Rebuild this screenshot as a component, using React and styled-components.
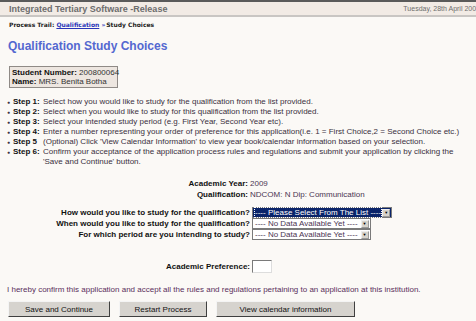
import React from 'react';
import styled, { createGlobalStyle } from 'styled-components';

const GlobalStyle = createGlobalStyle`
    html, body {
        margin: 0;
        padding: 0;
        background-color: #fbf9f6;
        font-family: "Liberation Sans", Arial, sans-serif;
        overflow: hidden;
    }
`;

const steps = [
    { label: 'Step 1:', text: 'Select how you would like to study for the qualification from the list provided.' },
    { label: 'Step 2:', text: 'Select when you would like to study for this qualification from the list provided.' },
    { label: 'Step 3:', text: 'Select your intended study period (e.g. First Year, Second Year etc).' },
    { label: 'Step 4:', text: 'Enter a number representing your order of preference for this application(i.e. 1 = First Choice,2 = Second Choice etc.)' },
    { label: 'Step 5', text: ' (Optional) Click \'View Calendar Information\' to view year book/calendar information based on your selection.' },
    { label: 'Step 6:', text: 'Confirm your acceptance of the application process rules and regulations and submit your application by clicking the \'Save and Continue\' button.' },
];

const questions = [
    { label: 'How would you like to study for the qualification?', value: '---- Please Select From The List ----', active: true },
    { label: 'When would you like to study for the qualification?', value: '---- No Data Available Yet ----' },
    { label: 'For which period are you intending to study?', value: '---- No Data Available Yet ----' },
];

const App = () => {
    return (
        <Page>
            <GlobalStyle />
            <Header>
                <AppName>Integrated Tertiary Software -Release</AppName>
                <DateText>Tuesday, 28th April 2009</DateText>
            </Header>
            <Trail>
                Process Trail: <TrailLink href="#">Qualification</TrailLink>
                {' '}<TrailArrow>»</TrailArrow>Study Choices
            </Trail>
            <Title>Qualification Study Choices</Title>
            <StudentBox>
                <div><b>Student Number:</b> 200800064</div>
                <div><b>Name:</b> MRS. Benita Botha</div>
            </StudentBox>
            <Steps>
                {steps.map((s) => (
                    <Step key={s.label}>
                        <Bullet>●</Bullet>
                        <StepLabel>{s.label}</StepLabel>
                        <StepText>{s.text}</StepText>
                    </Step>
                ))}
            </Steps>
            <InfoGrid>
                <InfoLabel>Academic Year:</InfoLabel>
                <InfoValue>2009</InfoValue>
                <InfoLabel>Qualification:</InfoLabel>
                <InfoValue>NDCOM: N Dip: Communication</InfoValue>
            </InfoGrid>
            <FormGrid>
                {questions.map((q) => (
                    <React.Fragment key={q.label}>
                        <FormLabel>{q.label}</FormLabel>
                        <SelectBox $active={q.active}>
                            <SelectText $active={q.active}>{q.value}</SelectText>
                            <SelectArrow>▼</SelectArrow>
                        </SelectBox>
                    </React.Fragment>
                ))}
            </FormGrid>
            <PrefGrid>
                <FormLabel>Academic Preference:</FormLabel>
                <PrefInput />
            </PrefGrid>
            <Confirm>
                I hereby confirm this application and accept all the rules and regulations pertaining to an application at this institution.
            </Confirm>
            <Buttons>
                <Button $w={102}>Save and Continue</Button>
                <Button $w={88}>Restart Process</Button>
                <Button $w={139}>View calendar information</Button>
            </Buttons>
        </Page>
    );
};

export default App;

const Page = styled.div`
    width: 476px;
    height: 321px;
    border-top: 2px solid #5a5a5a;
    box-sizing: border-box;
    overflow: hidden;
`;

const Header = styled.div`
    display: flex;
    justify-content: space-between;
    align-items: center;
    height: 13px;
    padding: 0 0 0 9px;
    background-color: #f2ebe5;
    border-bottom: 2px solid #c9c6c3;
    white-space: nowrap;
    overflow: hidden;
`;

const AppName = styled.span`
    font-size: 9px;
    font-weight: bold;
    color: #6d6d6d;
`;

const DateText = styled.span`
    font-size: 7px;
    color: #6d6d6d;
    margin-right: -4px;
`;

const Trail = styled.div`
    padding: 4px 0 0 9px;
    font-family: "DejaVu Sans", Verdana, sans-serif;
    font-size: 6px;
    font-weight: bold;
    color: #222;
`;

const TrailLink = styled.a`
    color: #2a35b8;
    text-decoration: underline;
`;

const TrailArrow = styled.span`
    color: #2a35b8;
    margin-right: 1px;
`;

const Title = styled.h1`
    margin: 11px 0 0 8px;
    font-size: 12px;
    font-weight: bold;
    color: #5468d0;
`;

const StudentBox = styled.div`
    display: inline-block;
    margin: 13px 0 0 9px;
    padding: 1px 2px;
    width: 103px;
    border: 1px solid #8f8a86;
    background-color: #ede6e0;
    font-size: 8px;
    line-height: 9px;
    white-space: nowrap;
    color: #333;
    b {
        color: #111;
    }
`;

const Steps = styled.ul`
    list-style: none;
    margin: 9px 0 0 0;
    padding: 0 0 0 7px;
    font-size: 8px;
    line-height: 10px;
    color: #3a3040;
`;

const Step = styled.li`
    display: grid;
    grid-template-columns: 6px 30px 1fr;
    padding-right: 12px;
`;

const Bullet = styled.span`
    font-size: 5px;
`;

const StepLabel = styled.span`
    font-weight: bold;
    color: #111;
`;

const StepText = styled.span``;

const InfoGrid = styled.div`
    display: grid;
    grid-template-columns: 248px auto;
    column-gap: 2px;
    margin-top: 11px;
    font-size: 8px;
    line-height: 11px;
`;

const InfoLabel = styled.span`
    text-align: right;
    font-weight: bold;
    color: #111;
`;

const InfoValue = styled.span`
    color: #4a3552;
`;

const FormGrid = styled.div`
    display: grid;
    grid-template-columns: 250px auto;
    column-gap: 2px;
    row-gap: 0;
    align-items: center;
    margin-top: 7px;
    font-size: 8px;
`;

const FormLabel = styled.span`
    text-align: right;
    font-weight: bold;
    color: #111;
`;

const SelectBox = styled.div`
    display: flex;
    align-items: center;
    justify-self: start;
    height: 9px;
    border: 1px solid #7a7a7a;
    background-color: ${(p) => (p.$active ? '#0a246a' : '#fff')};
    padding: 0 1px 0 2px;
`;

const SelectText = styled.span`
    color: ${(p) => (p.$active ? '#fff' : '#4a3552')};
    white-space: nowrap;
    margin-right: ${(p) => (p.$active ? '1px' : '3px')};
    ${(p) => p.$active && 'outline: 1px dotted #fff;'}
`;

const SelectArrow = styled.span`
    display: flex;
    align-items: center;
    justify-content: center;
    width: 8px;
    height: 8px;
    background-color: #d8d4cc;
    border: 1px outset #eee;
    box-sizing: border-box;
    font-size: 4px;
    color: #000;
`;

const PrefGrid = styled(FormGrid)`
    margin-top: 20px;
`;

const PrefInput = styled.div`
    width: 18px;
    height: 11px;
    background-color: #fff;
    border: 1px solid #7a7a7a;
    border-right-color: #ddd;
    border-bottom-color: #ddd;
`;

const Confirm = styled.p`
    margin: 12px 0 0 7px;
    font-size: 8px;
    line-height: 10px;
    color: #5a2f5c;
`;

const Buttons = styled.div`
    display: flex;
    gap: 9px;
    margin: 6px 0 0 8px;
`;

const Button = styled.button`
    width: ${(p) => p.$w}px;
    height: 16px;
    padding: 0;
    background-color: #d6d3ce;
    border: 1px solid;
    border-color: #f4f4f4 #404040 #404040 #f4f4f4;
    font-family: "Liberation Sans", Arial, sans-serif;
    font-size: 8px;
    color: #111;
`;
